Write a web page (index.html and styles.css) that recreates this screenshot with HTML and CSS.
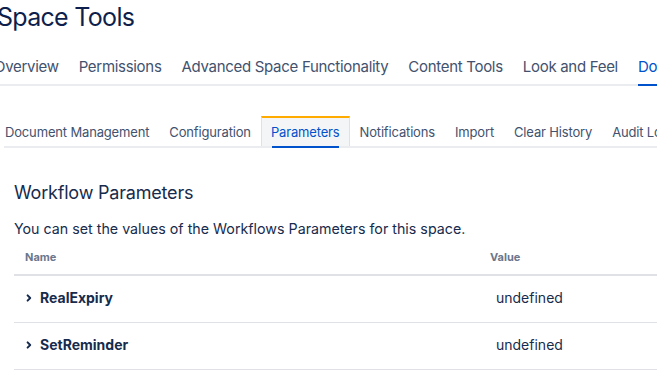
FILE: index.html
```html
<!DOCTYPE html>
<html lang="en">
<head>
    <meta charset="UTF-8">
    <meta name="viewport" content="width=device-width, initial-scale=1.0">
    <title>Space Tools</title>
    <link rel="stylesheet" href="styles.css">
</head>
<body>
<header class="page-header">
    <h1>Space Tools</h1>
</header>

<nav class="main-tabs">
    <ul>
        <li><a href="#">Overview</a></li>
        <li><a href="#">Permissions</a></li>
        <li><a href="#">Advanced Space Functionality</a></li>
        <li><a href="#">Content Tools</a></li>
        <li><a href="#">Look and Feel</a></li>
        <li class="active"><a href="#">Document Management</a></li>
    </ul>
</nav>

<nav class="sub-tabs">
    <ul>
        <li><a href="#">Document Management</a></li>
        <li><a href="#">Configuration</a></li>
        <li class="active"><a href="#"><span>Parameters</span></a></li>
        <li><a href="#">Notifications</a></li>
        <li><a href="#">Import</a></li>
        <li><a href="#">Clear History</a></li>
        <li><a href="#">Audit Log</a></li>
    </ul>
</nav>

<section class="content">
    <h2>Workflow Parameters</h2>
    <p class="intro">You can set the values of the Workflows Parameters for this space.</p>

    <div class="param-table">
        <div class="param-row param-head">
            <div class="col-name">Name</div>
            <div class="col-value">Value</div>
        </div>
        <div class="param-row">
            <div class="col-name">
                <svg class="chevron" width="8" height="10" viewBox="0 0 8 10"><path d="M2.6 2.4 L5.2 5 L2.6 7.6" fill="none" stroke="#172B4D" stroke-width="2" stroke-linecap="round" stroke-linejoin="round"/></svg>
                <strong>RealExpiry</strong>
            </div>
            <div class="col-value">undefined</div>
        </div>
        <div class="param-row">
            <div class="col-name">
                <svg class="chevron" width="8" height="10" viewBox="0 0 8 10"><path d="M2.6 2.4 L5.2 5 L2.6 7.6" fill="none" stroke="#172B4D" stroke-width="2" stroke-linecap="round" stroke-linejoin="round"/></svg>
                <strong>SetReminder</strong>
            </div>
            <div class="col-value">undefined</div>
        </div>
    </div>
</section>
</body>
</html>
```

FILE: styles.css
```css
body {
    font-family: 'Inter', 'Noto Sans', sans-serif;
    color: #172B4D;
    background-color: #fff;
    margin: 0;
    padding: 0;
    overflow: hidden;
}

ul {
    list-style-type: none;
    margin: 0;
    padding: 0;
}

a {
    text-decoration: none;
    color: inherit;
}

.page-header h1 {
    margin: 1px 0 0 -3px;
    font-size: 25px;
    line-height: 32px;
    letter-spacing: -0.7px;
    font-weight: 400;
    color: #0E1F4D;
    white-space: nowrap;
}

/* top level tabs */
.main-tabs {
    margin-top: 23px;
}

.main-tabs ul {
    display: flex;
    gap: 20px;
    border-bottom: 2px solid #EBECF0;
    white-space: nowrap;
    margin-left: -6px;
}

.main-tabs li a {
    display: block;
    font-size: 15px;
    line-height: 20px;
    letter-spacing: -0.3px;
    padding-top: 1px;
    padding-bottom: 7px;
    color: #42526E;
}

.main-tabs li.active a {
    color: #0052CC;
    border-bottom: 2px solid #0052CC;
    margin-bottom: -2px;
}

/* second level tabs */
.sub-tabs {
    margin-top: 30px;
    margin-left: 4px;
}

.sub-tabs ul {
    display: flex;
    border-bottom: 2px solid #EBECF0;
    white-space: nowrap;
}

.sub-tabs li a {
    display: block;
    font-size: 13px;
    line-height: 20px;
    letter-spacing: -0.16px;
    padding: 6px 10px 4px;
    color: #42526E;
}

.sub-tabs li:first-child a {
    padding-left: 1px;
}

.sub-tabs li.active a {
    position: relative;
    color: #0052CC;
    background-color: #F4F5F7;
    border-top: 2px solid #FFAB00;
    border-left: 1px solid #DFE1E6;
    border-right: 1px solid #DFE1E6;
    padding: 4px 9px 4px;
}

.sub-tabs li.active a::after {
    content: "";
    position: absolute;
    left: 10px;
    right: 10px;
    bottom: -2px;
    height: 2px;
    background-color: #0052CC;
}

/* page content */
.content {
    padding: 0 0 0 14px;
}

.content h2 {
    margin: 33px 0 0;
    font-size: 18px;
    line-height: 24px;
    letter-spacing: -0.2px;
    font-weight: 400;
}

.intro {
    margin: 14px 0 0;
    font-size: 14.25px;
    line-height: 20px;
}

.param-table {
    margin-top: 10px;
}

.param-row {
    display: grid;
    grid-template-columns: 476px 1fr;
    border-bottom: 1px solid #DFE1E6;
    padding: 12px 0 14px;
    font-size: 14px;
    line-height: 20px;
}

.param-head {
    border-bottom: 2px solid #DFE1E6;
    padding: 0 0 9px;
    font-size: 11px;
    line-height: 16px;
    font-weight: 700;
    color: #6B778C;
}

.col-name {
    display: flex;
    align-items: center;
    padding-left: 11px;
}

.param-row .col-value {
    padding-left: 6px;
}

.param-head .col-value {
    padding-left: 0;
}

.chevron {
    margin-right: 7px;
}

.col-name strong {
    font-weight: 700;
}
```
